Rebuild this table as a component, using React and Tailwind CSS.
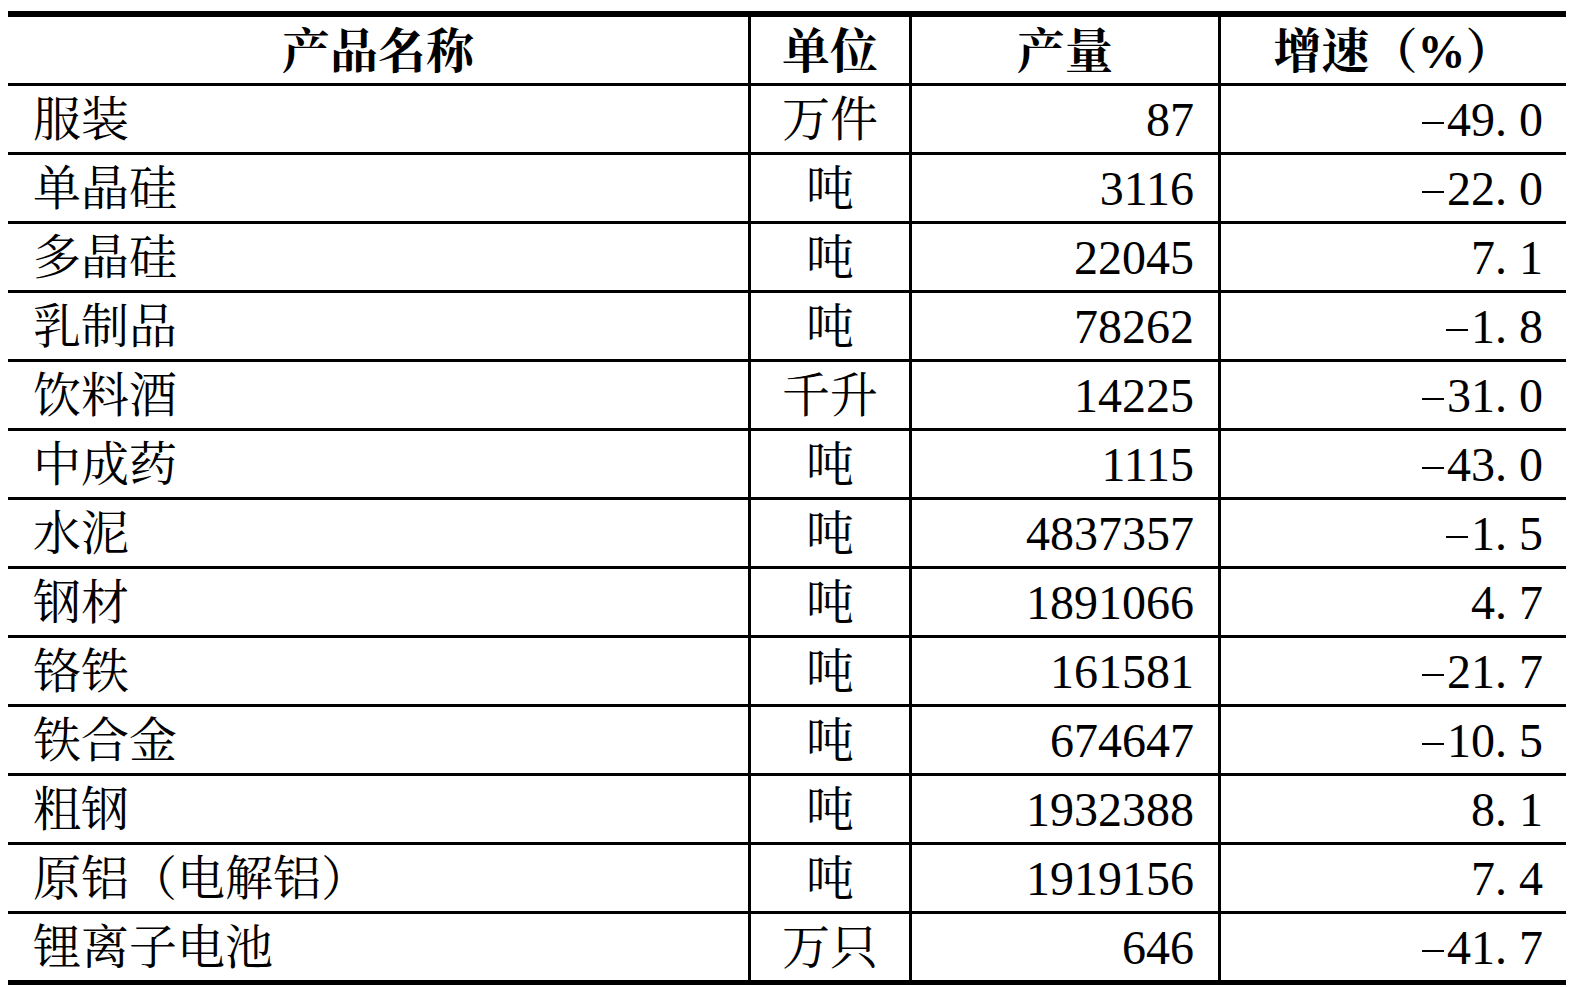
const rows = [
  ["服装", "万件", "87", "-49.0"],
  ["单晶硅", "吨", "3116", "-22.0"],
  ["多晶硅", "吨", "22045", "7.1"],
  ["乳制品", "吨", "78262", "-1.8"],
  ["饮料酒", "千升", "14225", "-31.0"],
  ["中成药", "吨", "1115", "-43.0"],
  ["水泥", "吨", "4837357", "-1.5"],
  ["钢材", "吨", "1891066", "4.7"],
  ["铬铁", "吨", "161581", "-21.7"],
  ["铁合金", "吨", "674647", "-10.5"],
  ["粗钢", "吨", "1932388", "8.1"],
  ["原铝（电解铝）", "吨", "1919156", "7.4"],
  ["锂离子电池", "万只", "646", "-41.7"],
];

function Num({ v }) {
  const parts = [];
  for (let i = 0; i < v.length; i++) {
    const c = v[i];
    if (c === ".") {
      parts.push(
        <span key={i} className="inline-block w-[24px] text-left">.</span>
      );
    } else if (c === "-") {
      parts.push(
        <span key={i} className="inline-block w-[26px] relative">
          <span className="opacity-0">-</span>
          <span className="absolute left-[1px] right-[3px] top-[55%] h-[2px] bg-black"></span>
        </span>
      );
    } else {
      parts.push(c);
    }
  }
  return <span>{parts}</span>;
}

export default function App() {
  const font = {
    fontFamily:
      '"Liberation Serif", "Noto Serif CJK SC", "Noto Sans CJK SC", serif',
  };
  return (
    <div className="w-[1569px] h-[987px] bg-white overflow-hidden pt-[11px] pl-[8px]" style={font}>
      <div className="w-[1558px] border-t-[6px] border-black text-black text-[48px] leading-none">
        <div className="grid grid-cols-[743px_161px_309px_345px] h-[69px] border-b-[3px] border-black font-bold">
          <div className="border-r-[3px] border-black flex items-center justify-center pt-[3px]">产品名称</div>
          <div className="border-r-[3px] border-black flex items-center justify-center pt-[3px]">单位</div>
          <div className="border-r-[3px] border-black flex items-center justify-center pt-[3px]">产量</div>
          <div className="flex items-center justify-center pt-[3px]">增速（%）</div>
        </div>
        {rows.map((r, i) => (
          <div
            key={i}
            className={
              "grid grid-cols-[743px_161px_309px_345px] border-black " +
              (i === rows.length - 1 ? "h-[71px] border-b-[5px]" : "h-[69px] border-b-[3px]")
            }
          >
            <div className="border-r-[3px] border-black flex items-center pl-[25px] pt-[2px] font-normal">{r[0]}</div>
            <div className="border-r-[3px] border-black flex items-center justify-center pt-[2px]">{r[1]}</div>
            <div className="border-r-[3px] border-black flex items-center justify-end pr-[24px] pt-[2px]">
              <Num v={r[2]} />
            </div>
            <div className="flex items-center justify-end pr-[23px] pt-[2px]">
              <Num v={r[3]} />
            </div>
          </div>
        ))}
      </div>
    </div>
  );
}
